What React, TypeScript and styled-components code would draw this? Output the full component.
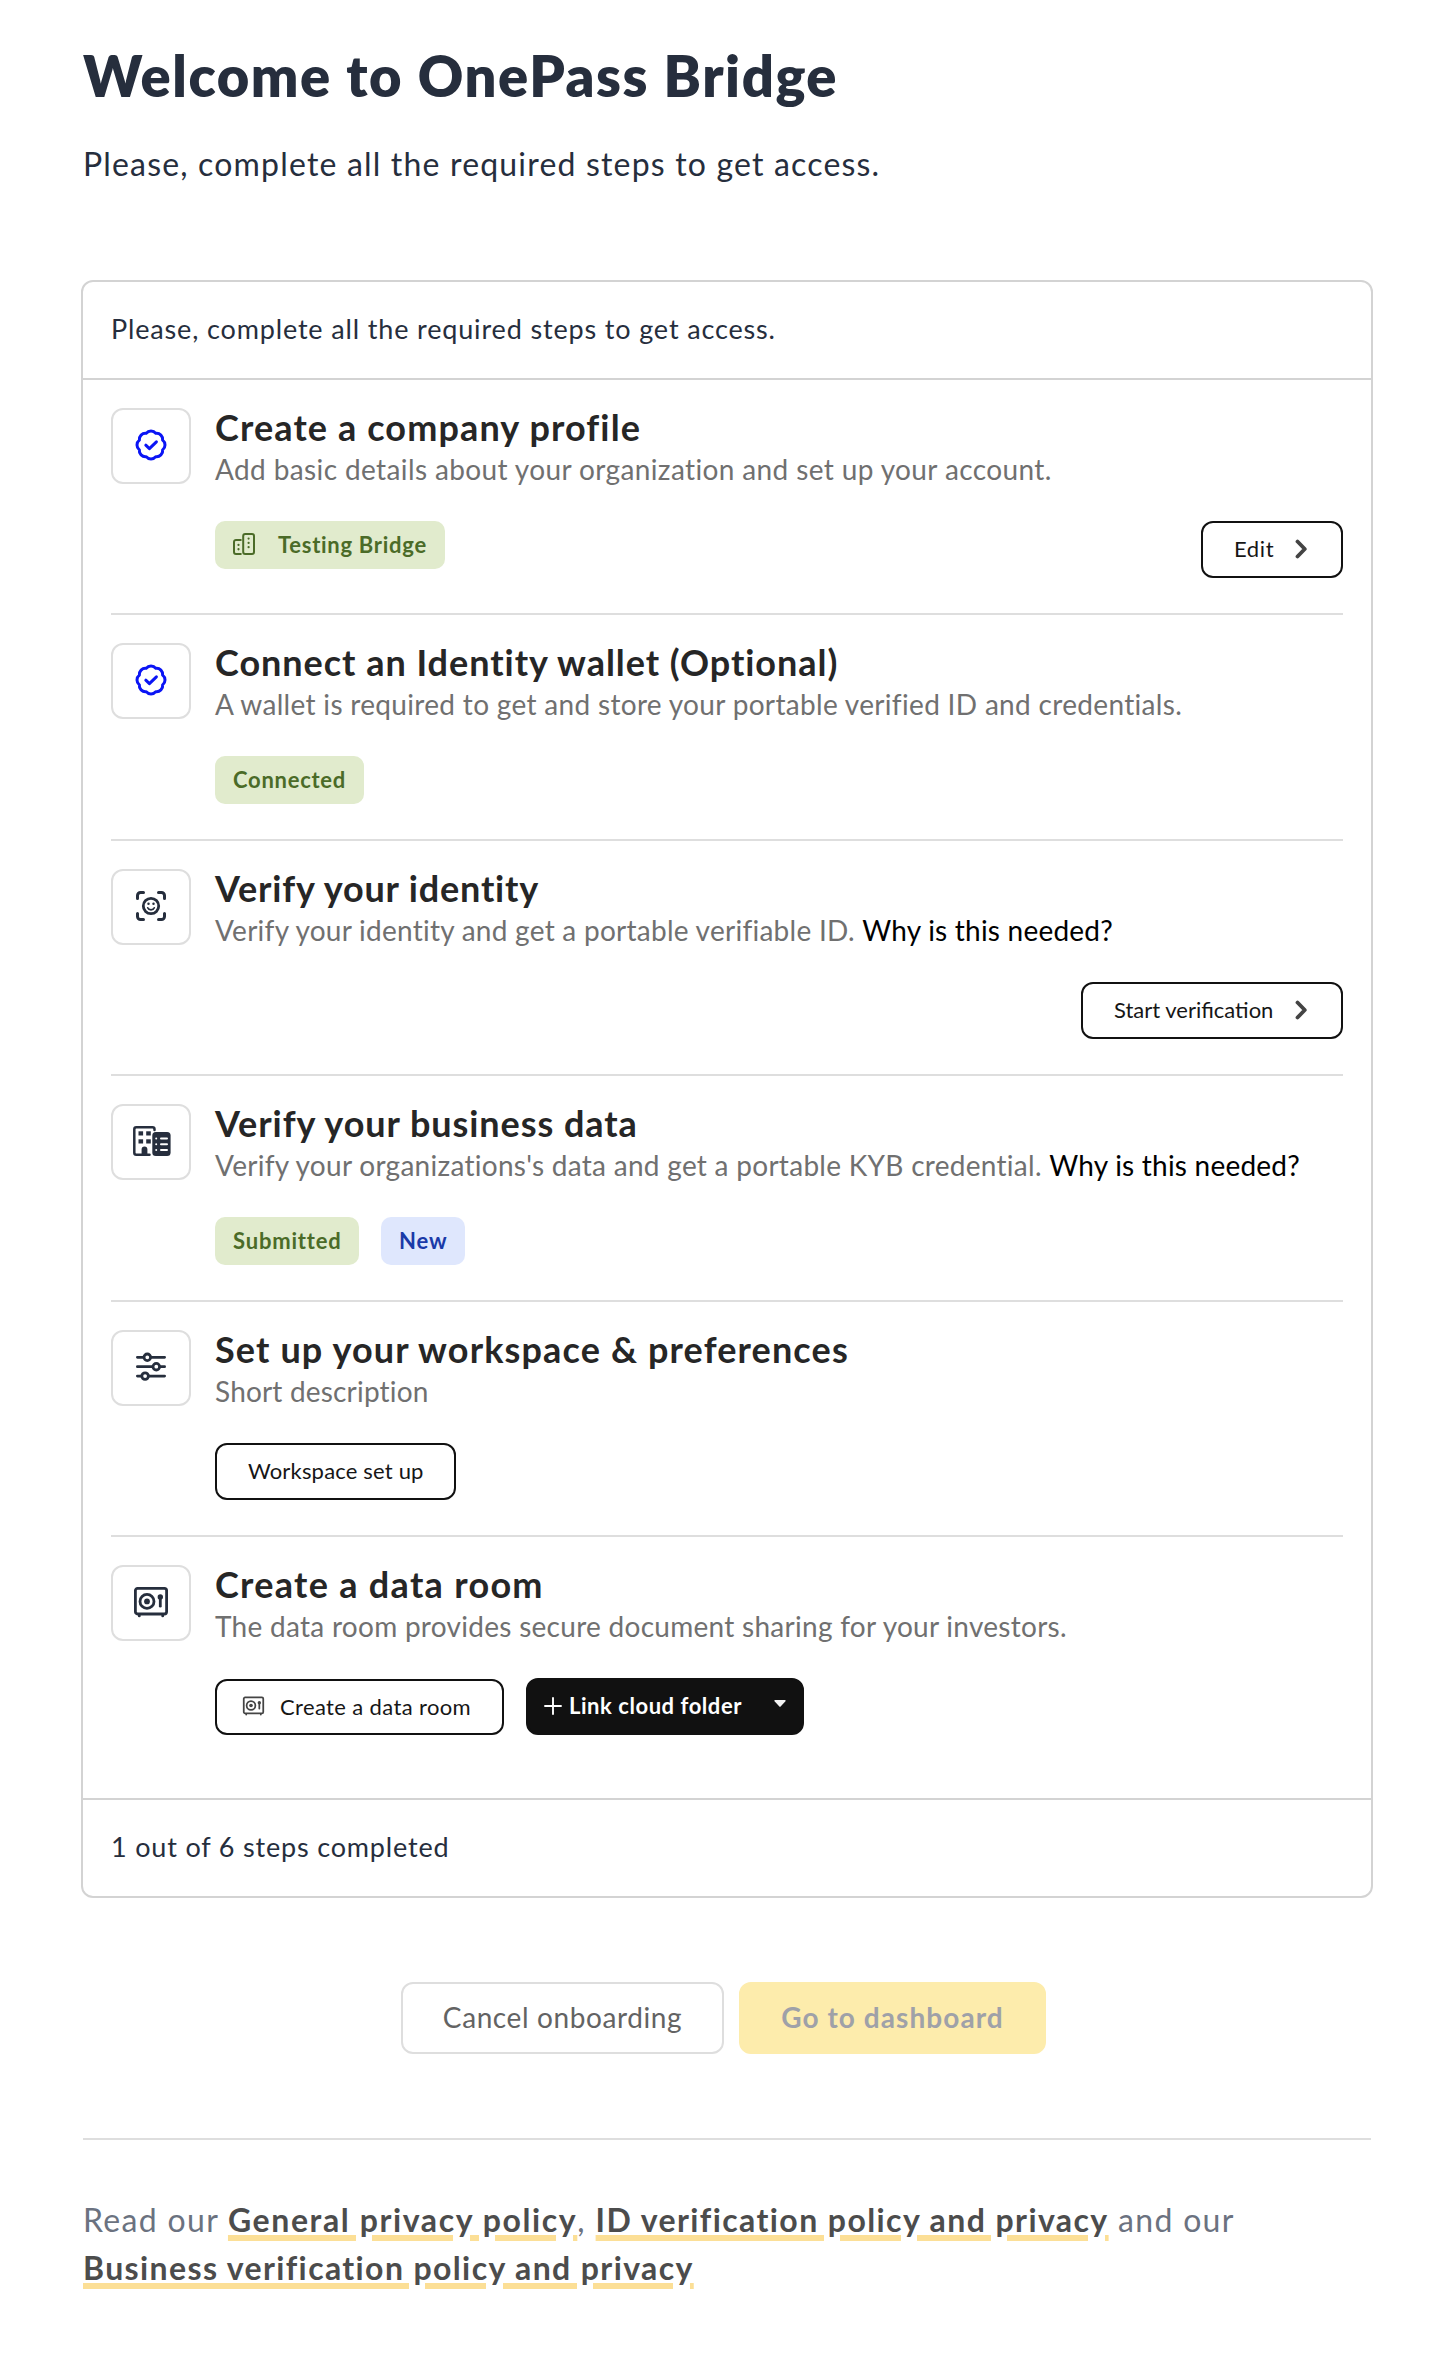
import React from "react";
import styled, { createGlobalStyle } from "styled-components";

const GlobalStyle = createGlobalStyle`
  *, *::before, *::after { box-sizing: border-box; }
  body {
    margin: 0;
    background: #fff;
    font-family: Lato, "Open Sans", sans-serif;
    font-variant-ligatures: none;
    color: #262e3d;
  }
`;

const Page = styled.main`
  width: 1452px;
  padding: 44px 79px 60px 81px;
`;

const Text = styled.span<{ $track?: number }>`
  letter-spacing: ${(p) => p.$track ?? 0}px;
  white-space: pre;
`;

const Heading = styled.h1`
  margin: 0 0 32px 2px;
  font-size: 56px;
  line-height: 64px;
  font-weight: 800;
`;

const Lead = styled.p`
  margin: 0 0 92px 2px;
  font-size: 32px;
  line-height: 48px;
`;

const Card = styled.section`
  border: 2px solid #d3d3d3;
  border-radius: 12px;
`;

const CardBar = styled.div<{ $edge: "top" | "bottom" }>`
  display: flex;
  align-items: center;
  height: 98px;
  padding: 0 28px 4px;
  font-size: 27px;
  ${(p) => (p.$edge === "top" ? "border-bottom" : "border-top")}: 2px solid #d3d3d3;
`;

const Steps = styled.div`
  padding: 0 28px 28px;
`;

const StepRow = styled.div`
  display: flex;
  gap: 24px;
  padding: 28px 0 35px;
  & + & {
    border-top: 2px solid #dedede;
  }
`;

const IconTile = styled.div`
  display: flex;
  align-items: center;
  justify-content: center;
  flex: none;
  width: 80px;
  height: 76px;
  border: 2px solid #dedede;
  border-radius: 12px;
`;

const StepBody = styled.div`
  flex: 1;
  min-width: 0;
`;

const StepTitle = styled.h2`
  margin: 0 0 3px;
  padding-top: 1px;
  font-size: 36px;
  line-height: 36px;
  font-weight: 700;
  color: #262626;
`;

const StepText = styled.p`
  margin: 0 0 31px;
  font-size: 28px;
  line-height: 42px;
  color: #707070;
`;

const WhyLink = styled(Text)`
  color: #000;
`;

const Actions = styled.div`
  display: flex;
  align-items: flex-start;
  justify-content: space-between;
`;

const ActionGroup = styled.div`
  display: flex;
  align-items: flex-end;
  gap: 22px;
`;

const Chip = styled.span<{ $tone?: "green" | "blue"; $width: number }>`
  display: flex;
  align-items: center;
  gap: 23px;
  width: ${(p) => p.$width}px;
  height: 48px;
  padding: 0 0 2px 18px;
  border-radius: 10px;
  font-size: 22px;
  font-weight: 700;
  color: ${(p) => (p.$tone === "blue" ? "#1a3aa8" : "#4b6b28")};
  background: ${(p) => (p.$tone === "blue" ? "#dfe7fd" : "#e1ebcd")};
`;

const Button = styled.button<{ $width: number; $height?: number; $pad?: number; $gap?: number }>`
  display: flex;
  align-items: center;
  gap: ${(p) => p.$gap ?? 22}px;
  width: ${(p) => p.$width}px;
  height: ${(p) => p.$height ?? 57}px;
  padding: 0 0 2px ${(p) => p.$pad ?? 31}px;
  border: 2px solid #111;
  border-radius: 12px;
  background: #fff;
  font-family: inherit;
  font-size: 22px;
  color: #161616;
`;

const DarkButton = styled(Button)`
  background: #111;
  color: #fff;
  font-weight: 700;
`;

const CaretSlot = styled.span`
  display: flex;
  margin-left: 25px;
  padding-bottom: 3px;
`;

const Footer = styled.div`
  display: flex;
  justify-content: center;
  gap: 15px;
  margin: 84px 7px 84px 0;
`;

const LargeButton = styled.button<{ $width: number; $primary?: boolean }>`
  width: ${(p) => p.$width}px;
  height: 72px;
  padding: 0 0 2px;
  border: 2px solid ${(p) => (p.$primary ? "#fdecac" : "#dedede")};
  border-radius: 12px;
  background: ${(p) => (p.$primary ? "#fdecac" : "#fff")};
  font-family: inherit;
  font-size: 28px;
  font-weight: ${(p) => (p.$primary ? 700 : 400)};
  color: ${(p) => (p.$primary ? "#9fa1a8" : "#636363")};
`;

const Rule = styled.hr`
  height: 2px;
  margin: 0 2px 56px;
  border: 0;
  background: #dedede;
`;

const Legal = styled.p`
  margin: 0 0 0 2px;
  font-size: 32px;
  line-height: 48px;
  color: #6b7280;
`;

const PolicyLink = styled(Text)`
  font-weight: 700;
  color: #4c4c4c;
  text-decoration: underline;
  text-decoration-color: #fcdf96;
  text-decoration-thickness: 6px;
  text-underline-offset: 3px;
`;

const BadgeIcon = () => (
  <svg width="40" height="40" viewBox="0 0 40 40" fill="none" stroke="#0a14f5" strokeWidth="3" strokeLinecap="round" strokeLinejoin="round">
    <path d="M15.18 7.36A6.1 6.1 0 0 1 24.82 7.36A6.1 6.1 0 0 1 31.64 14.18A6.1 6.1 0 0 1 31.64 23.82A6.1 6.1 0 0 1 24.82 30.64A6.1 6.1 0 0 1 15.18 30.64A6.1 6.1 0 0 1 8.36 23.82A6.1 6.1 0 0 1 8.36 14.18A6.1 6.1 0 0 1 15.18 7.36Z" />
    <path d="M14.8 19.2L18.4 22.6L25.4 15.8" />
  </svg>
);

const FaceIcon = () => (
  <svg width="40" height="40" viewBox="0 0 40 40" fill="none" stroke="#262e3d" strokeWidth="3" strokeLinecap="round" strokeLinejoin="round">
    <path d="M6.5 11.500V8.500a3 3 0 0 1 3-3h3M27.500 5.500h3a3 3 0 0 1 3 3v3M33.500 26.500v3a3 3 0 0 1-3 3h-3M12.500 32.500h-3a3 3 0 0 1-3-3v-3" />
    <circle cx="20" cy="19" r="7.700" strokeWidth="2.800" />
    <path d="M16.700 20.800a3.500 3 0 0 0 6.600 0" strokeWidth="1.700" />
    <path d="M17.500 16.700v.1M22.500 16.700v.1" strokeWidth="2.500" />
  </svg>
);

const BusinessIcon = () => (
  <svg width="40" height="40" viewBox="0 0 40 40" fill="none" stroke="#262e3d" strokeWidth="2.500" strokeLinecap="round">
    <path d="M23.500 8V7.200a2 2 0 0 0-2-2H5.300a2 2 0 0 0-2 2v23.600a2 2 0 0 0 2 2H18.500" />
    <g fill="#262e3d" stroke="none">
      <rect x="7.500" y="9.300" width="4.600" height="4.200" />
      <rect x="15.200" y="9.300" width="4.600" height="4.200" />
      <rect x="7.500" y="17.300" width="4.600" height="4.200" />
      <rect x="15.200" y="17.300" width="4.600" height="4.200" />
      <path d="M10.600 33V27.300a2.900 2.900 0 0 1 5.800 0V33z" />
      <rect x="21.300" y="10" width="18.300" height="24" rx="3.500" />
    </g>
    <path d="M25.200 16.500v.1M25.200 22.200v.1M25.200 27.900v.1M30 16.500h6M30 22.200h6M30 27.900h6" stroke="#fff" strokeWidth="2" />
  </svg>
);

const SlidersIcon = () => (
  <svg width="40" height="40" viewBox="0 0 40 40" fill="none" stroke="#262e3d" strokeWidth="2.800" strokeLinecap="round">
    <path d="M6.400 9.300h6.300M20 9.300h13.600M6.400 18.700h15.200M29 18.700h4.600M6.400 28.100h4.100M17.800 28.100h15.800" />
    <circle cx="16.300" cy="9.300" r="3.300" />
    <circle cx="25.300" cy="18.700" r="3.300" />
    <circle cx="14.100" cy="28.100" r="3.300" />
  </svg>
);

const SafeIcon = ({ size = 40, color = "#262e3d" }: { size?: number; color?: string }) => (
  <svg width={size} height={size} viewBox="0 0 40 40" fill="none" stroke={color} strokeWidth="2.800" strokeLinecap="round">
    <rect x="4.400" y="5.400" width="31.200" height="25.600" rx="2.200" />
    <path d="M8.300 32.600v.3M31.700 32.600v.3" />
    <circle cx="16" cy="18.400" r="7" />
    <circle cx="16" cy="18.400" r="2.900" fill={color} stroke="none" />
    <circle cx="29.300" cy="14" r="2.700" fill={color} stroke="none" />
    <path d="M29.300 14v9.200" />
  </svg>
);

const BuildingsIcon = () => (
  <svg width="22" height="22" viewBox="0 0 22 22" fill="none" stroke="#4b6b28" strokeWidth="2" strokeLinecap="round">
    <rect x="10.200" y="1" width="10.800" height="20" rx="2" />
    <path d="M7.800 6.900H3a2 2 0 0 0-2 2V19a2 2 0 0 0 2 2h4.800" />
    <path d="M15.600 5.500v.1M15.600 9.800v.1M15.600 14.100v.1M5.500 11.800v.1M5.500 16.200v.1" strokeWidth="2.200" />
  </svg>
);

const Chevron = () => (
  <svg width="13" height="20" viewBox="0 0 13 20" fill="none" stroke="#444" strokeWidth="3.800" strokeLinecap="round" strokeLinejoin="round">
    <path d="M2.500 2.500L9.800 10L2.500 17.500" />
  </svg>
);

const Plus = () => (
  <svg width="18" height="18" viewBox="0 0 18 18" stroke="#fff" strokeWidth="1.900" strokeLinecap="round">
    <path d="M9 1v16M1 9h16" />
  </svg>
);

const Caret = () => (
  <svg width="12" height="8" viewBox="0 0 12 8" fill="#f2f2f2">
    <path d="M1 0h10a.7.7 0 0 1 .5 1.200L6.600 6.600a.8.800 0 0 1-1.200 0L.5 1.200A.7.700 0 0 1 1 0z" />
  </svg>
);

type StepProps = {
  icon: React.ReactNode;
  title: string;
  titleTrack: number;
  text: string;
  textTrack: number;
  why?: boolean;
  children: React.ReactNode;
};

const Step = ({ icon, title, titleTrack, text, textTrack, why, children }: StepProps) => (
  <StepRow>
    <IconTile>{icon}</IconTile>
    <StepBody>
      <StepTitle>
        <Text $track={titleTrack}>{title}</Text>
      </StepTitle>
      <StepText>
        <Text $track={textTrack}>{text}</Text>
        {why && <WhyLink $track={0.22}>Why is this needed?</WhyLink>}
      </StepText>
      <Actions>{children}</Actions>
    </StepBody>
  </StepRow>
);

export default function App() {
  return (
    <Page>
      <GlobalStyle />
      <Heading>
        <Text $track={1.57}>Welcome to OnePass Bridge</Text>
      </Heading>
      <Lead>
        <Text $track={1.18}>Please, complete all the required steps to get access.</Text>
      </Lead>

      <Card>
        <CardBar $edge="top">
          <Text $track={0.85}>Please, complete all the required steps to get access.</Text>
        </CardBar>
        <Steps>
          <Step
            icon={<BadgeIcon />}
            title="Create a company profile"
            titleTrack={1.12}
            text="Add basic details about your organization and set up your account."
            textTrack={0.38}
          >
            <Chip $width={230}>
              <BuildingsIcon />
              <Text $track={0.72}>Testing Bridge</Text>
            </Chip>
            <Button $width={142} $gap={21}>
              <Text $track={0.6}>Edit</Text>
              <Chevron />
            </Button>
          </Step>
          <Step
            icon={<BadgeIcon />}
            title="Connect an Identity wallet (Optional)"
            titleTrack={0.97}
            text="A wallet is required to get and store your portable verified ID and credentials."
            textTrack={0.32}
          >
            <Chip $width={149}>
              <Text $track={0.73}>Connected</Text>
            </Chip>
          </Step>
          <Step
            icon={<FaceIcon />}
            title="Verify your identity"
            titleTrack={0.84}
            text="Verify your identity and get a portable verifiable ID. "
            textTrack={0.26}
            why
          >
            <span />
            <Button $width={262} $gap={22}>
              <Text $track={0}>Start verification</Text>
              <Chevron />
            </Button>
          </Step>
          <Step
            icon={<BusinessIcon />}
            title="Verify your business data"
            titleTrack={0.94}
            text="Verify your organizations's data and get a portable KYB credential. "
            textTrack={0.28}
            why
          >
            <ActionGroup>
              <Chip $width={144}>
                <Text $track={0.8}>Submitted</Text>
              </Chip>
              <Chip $tone="blue" $width={84}>
                <Text $track={0.9}>New</Text>
              </Chip>
            </ActionGroup>
          </Step>
          <Step
            icon={<SlidersIcon />}
            title="Set up your workspace & preferences"
            titleTrack={1.13}
            text="Short description"
            textTrack={0.18}
          >
            <Button $width={241}>
              <Text $track={0.18}>Workspace set up</Text>
            </Button>
          </Step>
          <Step
            icon={<SafeIcon />}
            title="Create a data room"
            titleTrack={1.3}
            text="The data room provides secure document sharing for your investors."
            textTrack={0.28}
          >
            <ActionGroup>
              <Button $width={289} $height={56} $pad={24} $gap={14}>
                <SafeIcon size={25} color="#444" />
                <Text $track={0.37}>Create a data room</Text>
              </Button>
              <DarkButton $width={278} $pad={16} $gap={7}>
                <Plus />
                <Text $track={0.55}>Link cloud folder</Text>
                <CaretSlot>
                  <Caret />
                </CaretSlot>
              </DarkButton>
            </ActionGroup>
          </Step>
        </Steps>
        <CardBar $edge="bottom">
          <Text $track={0.82}>1 out of 6 steps completed</Text>
        </CardBar>
      </Card>

      <Footer>
        <LargeButton $width={323}>
          <Text $track={0.6}>Cancel onboarding</Text>
        </LargeButton>
        <LargeButton $width={307} $primary>
          <Text $track={1.07}>Go to dashboard</Text>
        </LargeButton>
      </Footer>

      <Rule />

      <Legal>
        <Text $track={1.32}>Read our </Text>
        <PolicyLink $track={1.6}>General privacy policy</PolicyLink>
        <Text $track={1.4}>, </Text>
        <PolicyLink $track={1.41}>ID verification policy and privacy</PolicyLink>
        <Text $track={1.3}> and our</Text>
        <br />
        <PolicyLink $track={1.38}>Business verification policy and privacy</PolicyLink>
      </Legal>
    </Page>
  );
}
